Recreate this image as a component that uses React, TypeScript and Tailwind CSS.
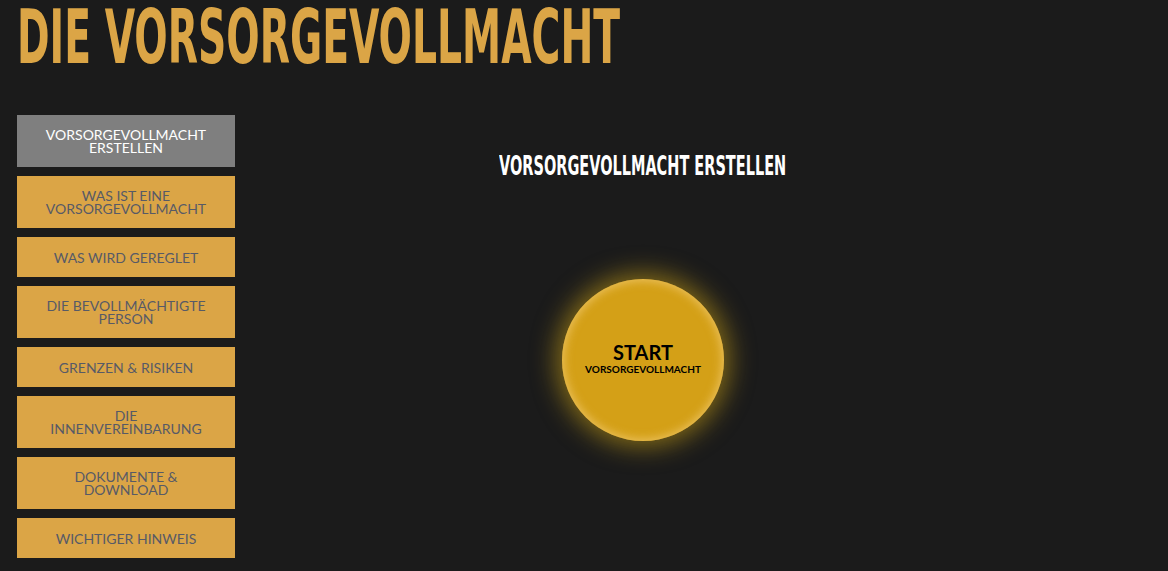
import React from "react";

const items = [
  { lines: ["VORSORGEVOLLMACHT", "ERSTELLEN"], active: true },
  { lines: ["WAS IST EINE", "VORSORGEVOLLMACHT"] },
  { lines: ["WAS WIRD GEREGLET"] },
  { lines: ["DIE BEVOLLMÄCHTIGTE", "PERSON"] },
  { lines: ["GRENZEN & RISIKEN"] },
  { lines: ["DIE", "INNENVEREINBARUNG"] },
  { lines: ["DOKUMENTE &", "DOWNLOAD"] },
  { lines: ["WICHTIGER HINWEIS"] },
];

const condensed = { fontFamily: "'Liberation Sans Narrow', 'DejaVu Sans Condensed', 'Liberation Sans', sans-serif" };

export default function App() {
  return (
    <div className="w-[1168px] h-[571px] overflow-hidden bg-[#1b1b1b]" style={{ fontFamily: "Lato, 'Open Sans', sans-serif" }}>
      <div className="pl-[17px] h-[70px]">
        <h1
          className="text-[#dba546] text-[74px] leading-[74px] font-bold origin-left scale-x-[0.59] whitespace-nowrap inline-block"
          style={condensed}
        >
          DIE VORSORGEVOLLMACHT
        </h1>
      </div>
      <div className="flex mt-[45px]">
        <nav className="ml-[17px] w-[218px] flex flex-col gap-[9px]">
          {items.map((it, i) => (
            <div
              key={i}
              className={`flex flex-col items-center justify-center text-center text-[14px] leading-[13px] ${
                it.lines.length > 1 ? "h-[52px]" : "h-[40px]"
              } ${it.active ? "bg-[#7f7f7f] text-white" : "bg-[#dba546] text-[#575a66]"}`}
            >
              {it.lines.map((l, j) => (
                <span key={j}>{l}</span>
              ))}
            </div>
          ))}
        </nav>
        <main className="w-[816px] flex flex-col items-center">
          <h2
            className="mt-[36px] text-white text-[26px] leading-[30px] font-bold origin-center scale-x-[0.62] whitespace-nowrap"
            style={condensed}
          >
            VORSORGEVOLLMACHT ERSTELLEN
          </h2>
          <div className="mt-[98px] w-[162px] h-[162px] rounded-full bg-[#d4a017] flex flex-col items-center justify-center shadow-[0_0_25px_6px_rgba(214,170,20,0.55),inset_0_0_10px_2px_rgba(240,200,110,0.8)]">
            <span className="text-black text-[20px] leading-[20px] font-bold">START</span>
            <span className="text-black text-[10px] leading-[12px] font-bold mt-[1px] mb-[3px]">VORSORGEVOLLMACHT</span>
          </div>
        </main>
      </div>
    </div>
  );
}
